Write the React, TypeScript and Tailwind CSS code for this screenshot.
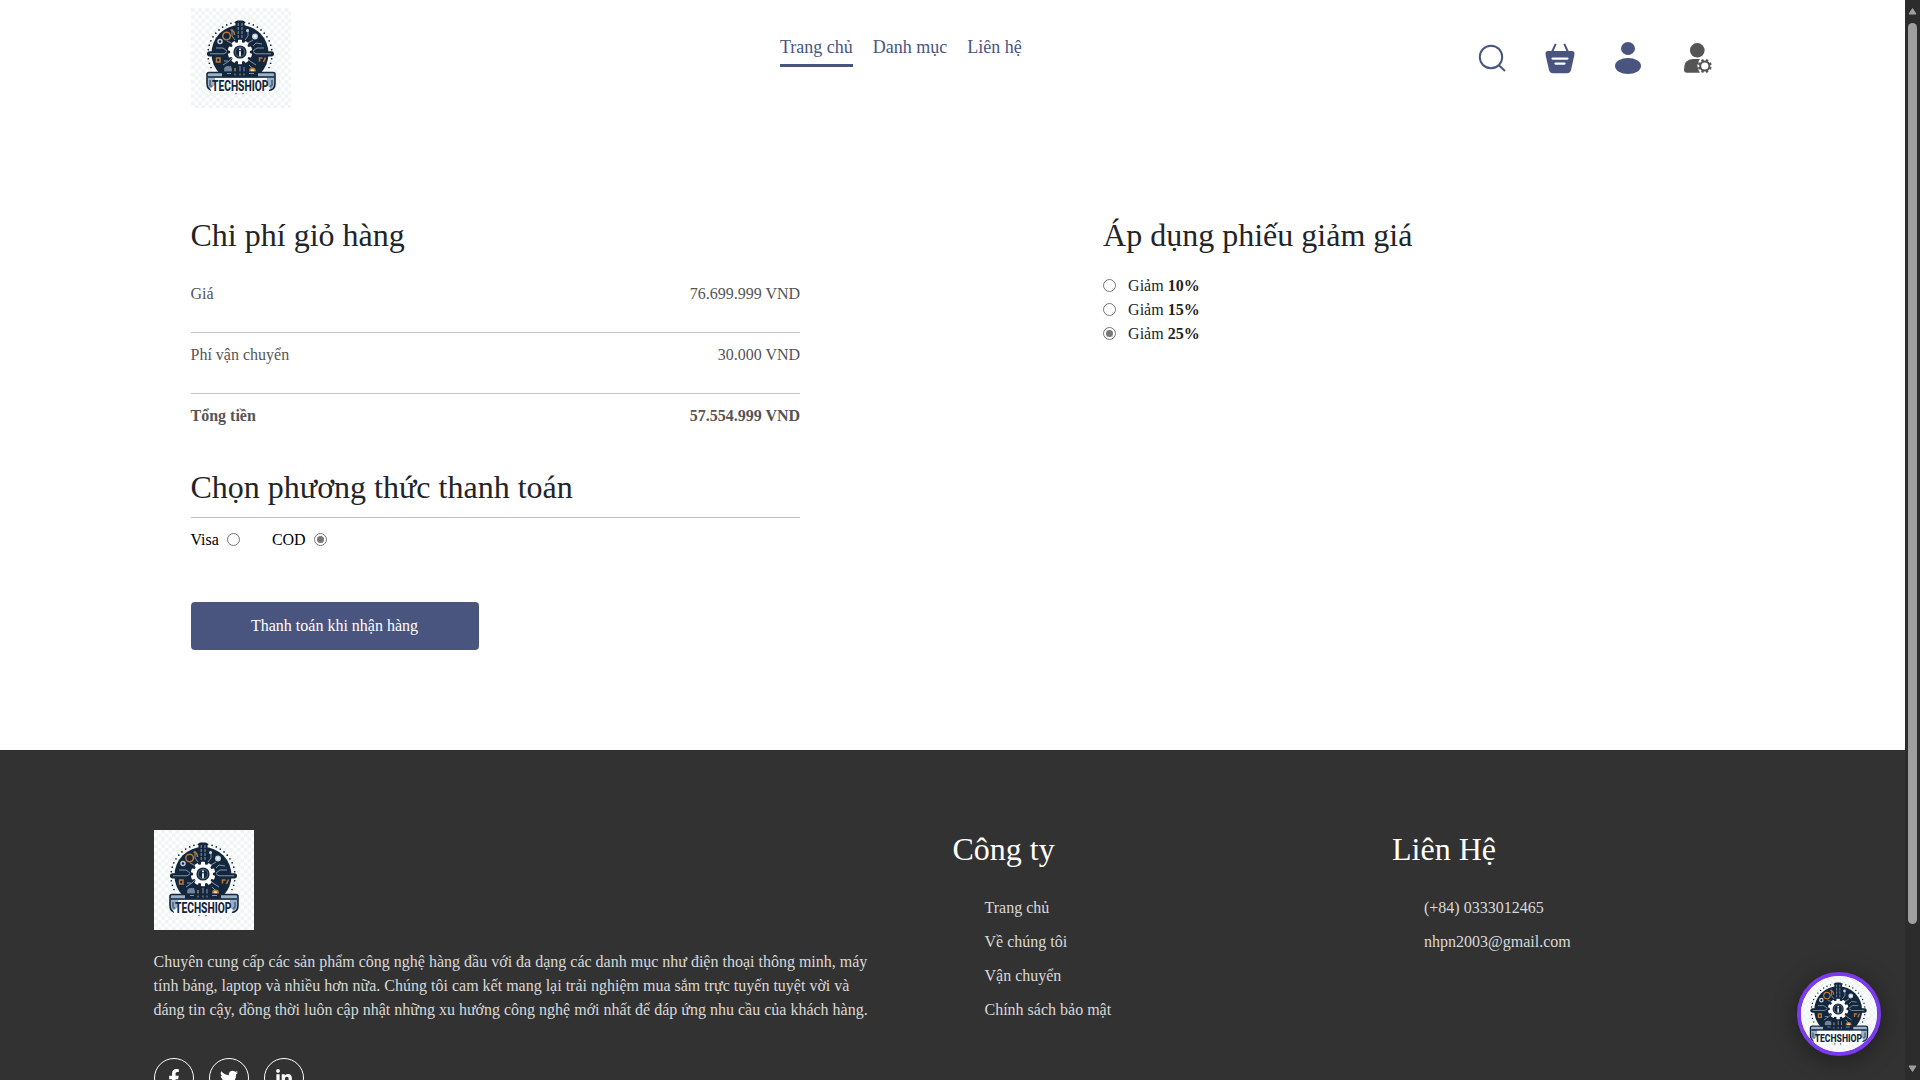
import React from 'react';
import { FaFacebookF, FaTwitter, FaLinkedinIn } from 'react-icons/fa';

const NAVY = '#14263c';

function Logo({ className }: { className?: string }) {
  const dots = Array.from({ length: 29 }, (_, i) => ((-205 + (i * 230) / 28) * Math.PI) / 180);
  const teeth = Array.from({ length: 10 }, (_, i) => i * 36);
  return (
    <svg viewBox="0 0 100 100" className={className}>
      <defs>
        <pattern id="checks" width="7.2" height="7.2" patternUnits="userSpaceOnUse">
          <rect width="7.2" height="7.2" fill="#fdfefe" />
          <rect width="3.6" height="3.6" fill="#f0f4f4" />
          <rect x="3.6" y="3.6" width="3.6" height="3.6" fill="#f0f4f4" />
        </pattern>
      </defs>
      <rect width="100" height="100" fill="url(#checks)" />
      {dots.map((a, i) => (
        <circle key={i} cx={49 + 32 * Math.cos(a)} cy={46 + 32 * Math.sin(a)} r="0.85" fill={NAVY} />
      ))}
      <circle cx="49" cy="45.5" r="28.5" fill={NAVY} />
      <rect x="44.500" y="12.500" width="9" height="12" rx="2" fill={NAVY} />
      <rect x="16" y="43.2" width="67" height="5.2" rx="2.6" fill={NAVY} />
      <g fill="none" stroke="#8da3b8" strokeWidth="0.9">
        <path d="M47.2 15v15M51 15v15" strokeDasharray="3 1" />
        <path d="M19 45.8h14l3-2M80 45.8H65l-3-2M25 40h7l4 3M73 40h-7l-4 3M71 36l-6-1-3 3" />
        <path d="M41 21v7l3 4M57 21v7l-3 4M36 33l4 2M62 32l-5 3M33 53h4M32 57l6-4 3-3M65 57l-6-4-3-3M49 58v10M53 59v9M40 58l-6 7M58 57l7 7" />
      </g>
      <g fill="none" stroke="#ba7a36" strokeWidth="1.5">
        <circle cx="35.600" cy="28" r="3.8" />
        <path d="M39.500 22q4 .5 4 5M25.500 50h3.500v4h-3.500zM68.500 53.500v-3.500h3M74.500 49.500l-2 4.500" />
        <circle cx="61.5" cy="63" r="2.7" fill="#f5d4a5" />
        <path d="M44 60v8" />
      </g>
      <g fill="none" stroke="#c5d0d9" strokeWidth="1.5">
        <circle cx="29" cy="33.5" r="2" />
        <circle cx="64" cy="28.5" r="2.2" fill="#eef3f6" />
        <circle cx="56.500" cy="22.500" r="0.8" />
      </g>
      <circle cx="37" cy="62" r="4" fill="#70859b" />
      <g fill="#fff">
        <circle cx="49" cy="44" r="10" />
        {teeth.map((t) => (
          <rect key={t} x="47" y="31.800" width="4" height="6" rx="0.8" transform={`rotate(${t} 49 44)`} />
        ))}
      </g>
      <circle cx="49" cy="44" r="6.6" fill={NAVY} />
      <circle cx="49" cy="44" r="4.8" fill="none" stroke="#6f8497" strokeWidth="0.7" />
      <path d="M49 40.5v1.7M49 43.2v5" stroke="#fff" strokeWidth="1.7" />
      <path
        d="M18 64.500H82q2 0 2 2v9q0 7-7 7H23q-7 0-7-7v-9q0-2 2-2z"
        fill="#9bb1ca"
        stroke={NAVY}
        strokeWidth="1.6"
      />
      <path d="M31 63.500H67V69H31z" fill={NAVY} />
      <path d="M36 65.500h4M44 65.500v2M49 65.500v2M53 65.500v2M58 65.500h5" stroke="#8da3b8" strokeWidth="0.9" />
      <path d="M17 69H83" fill="none" stroke={NAVY} strokeWidth="1.600" />
      <path d="M24 70H76V77l3 3-2 5H21l-2-5 5-3z" fill="#fbfcfd" />
      <path d="M19 72v5l2 2M81 72v5l-2 2" fill="none" stroke="#526b86" strokeWidth="1.800" />
      <text
        x="21"
        y="82.8"
        textLength="56.5"
        lengthAdjust="spacingAndGlyphs"
        fontFamily="Roboto, 'Liberation Sans', sans-serif"
        fontWeight="800"
        fontSize="14"
        fill={NAVY}
      >
        TECHSHIOP
      </text>
      <circle cx="45" cy="85.6" r="0.7" fill={NAVY} />
      <circle cx="52" cy="85.6" r="0.7" fill={NAVY} />
    </svg>
  );
}

function SearchIcon() {
  return (
    <svg width="28" height="28" viewBox="0 0 28 28" className="block" fill="none" stroke="#49557e" strokeWidth="2">
      <circle cx="13" cy="13" r="11.2" />
      <path d="M20.6 21L27 27" />
    </svg>
  );
}

function BasketIcon() {
  return (
    <svg width="30" height="31" viewBox="0 0 30 31" className="block">
      <path d="M3 8H27q3 0 2.4 4L26 27q-.9 3.300-4 3.300H8q-3.100 0-4-3.300L.6 12Q0 8 3 8z" fill="#49557e" />
      <path d="M7 9L10.700.8M23 9L19.300.8" stroke="#49557e" strokeWidth="2" />
      <path d="M7.500 15.600h15M10.500 20.600h9" stroke="#fff" strokeWidth="2.200" strokeLinecap="round" />
    </svg>
  );
}

function UserIcon() {
  return (
    <svg width="26" height="32" viewBox="0 0 26 32" className="block" fill="#49557e">
      <ellipse cx="13" cy="6.500" rx="7" ry="6.500" />
      <ellipse cx="13" cy="24" rx="13" ry="8" />
    </svg>
  );
}

function UserGearIcon() {
  return (
    <svg width="28" height="30" viewBox="0 0 28 30" className="block">
      <circle cx="13.300" cy="7.300" r="7.300" fill="#555" />
      <path d="M9 16H16q-2 2-1.500 4-2 2-.8 4 .3 3 2.300 5.700H3q-3 0-3-3Q0 16 9 16z" fill="#555" />
      <circle cx="20.800" cy="23" r="4.600" fill="none" stroke="#555" strokeWidth="2" />
      {[22.5, 67.5, 112.5, 157.5, 202.5, 247.5, 292.5, 337.5].map((t) => (
        <rect key={t} x="19.600" y="16" width="2.400" height="2.600" fill="#555" transform={`rotate(${t} 20.8 23)`} />
      ))}
    </svg>
  );
}

function Radio({ checked = false }: { checked?: boolean }) {
  return (
    <span className="mb-px flex size-[13px] shrink-0 items-center justify-center rounded-full border border-[#767676] bg-white">
      {checked && <span className="size-[7px] rounded-full bg-[#767676]" />}
    </span>
  );
}

const costs = [
  { label: 'Giá', value: '76.699.999 VND' },
  { label: 'Phí vận chuyển', value: '30.000 VND' },
];

const socials = [FaFacebookF, FaTwitter, FaLinkedinIn];

export default function App() {
  return (
    <div className="flex h-[1080px] w-[1920px] overflow-hidden bg-white font-['Liberation_Serif',serif] text-base text-[#212529]">
      <div className="relative flex w-[1905px] shrink-0 flex-col overflow-hidden">
        <header className="flex h-[116px] shrink-0 items-start pl-[191px] pr-[193px] pt-2">
          <Logo className="size-[100px]" />
          <nav className="ml-[489px] mt-[26px] flex gap-5 text-[18px] leading-[27px] text-[#49557e]">
            <a className="border-b-3 border-[#49557e] pb-[3px]">Trang chủ</a>
            <a>Danh mục</a>
            <a>Liên hệ</a>
          </nav>
          <div className="ml-auto mt-[34px] flex h-8 items-center gap-[40px]">
            <div className="-mr-px">
              <SearchIcon />
            </div>
            <BasketIcon />
            <UserIcon />
            <div className="ml-[3px]">
              <UserGearIcon />
            </div>
          </div>
        </header>

        <main className="flex h-[634px] shrink-0 pl-[190.5px] pt-[100px]">
          <section className="w-[609.600px]">
            <h2 className="text-[32px] leading-[38px]">Chi phí giỏ hàng</h2>
            <div className="mt-[28px] text-[#555]">
              {costs.map((c) => (
                <div key={c.label} className="mb-[10px] flex h-[51px] justify-between border-b border-[#c4c4c4] leading-6">
                  <span>{c.label}</span>
                  <span>{c.value}</span>
                </div>
              ))}
              <div className="flex justify-between font-bold leading-6">
                <span>Tổng tiền</span>
                <span>57.554.999 VND</span>
              </div>
            </div>
            <h2 className="mt-[40px] border-b border-[#c4c4c4] pb-[11px] text-[32px] leading-[38px]">
              Chọn phương thức thanh toán
            </h2>
            <div className="mt-[10px] flex items-center leading-6 text-black">
              <span className="mr-2">Visa</span>
              <Radio />
              <span className="ml-8 mr-2">COD</span>
              <Radio checked />
            </div>
            <button className="mt-[50px] h-12 w-[288px] rounded-[4px] bg-[#49557e] text-white">
              Thanh toán khi nhận hàng
            </button>
          </section>
          <section className="ml-[303px]">
            <h2 className="text-[32px] leading-[38px]">Áp dụng phiếu giảm giá</h2>
            <div className="mt-[20px]">
              {['10%', '15%', '25%'].map((p) => (
                <div key={p} className="flex h-6 items-center gap-3">
                  <Radio checked={p === '25%'} />
                  <span>
                    Giảm <b>{p}</b>
                  </span>
                </div>
              ))}
            </div>
          </section>
        </main>

        <footer className="grid h-[500px] shrink-0 grid-cols-[2fr_1fr_1fr] gap-20 bg-[#323232] px-[153.500px] pt-20 text-[#d9d9d9]">
          <div>
            <Logo className="size-[100px]" />
            <p className="mt-5 whitespace-nowrap leading-6">
              Chuyên cung cấp các sản phẩm công nghệ hàng đầu với đa dạng các danh mục như điện thoại thông minh, máy
              <br />
              tính bảng, laptop và nhiều hơn nữa. Chúng tôi cam kết mang lại trải nghiệm mua sắm trực tuyến tuyệt vời và
              <br />
              đáng tin cậy, đồng thời luôn cập nhật những xu hướng công nghệ mới nhất để đáp ứng nhu cầu của khách hàng.
            </p>
            <div className="mt-9 flex gap-[15px]">
              {socials.map((Icon, i) => (
                <span key={i} className="flex size-10 items-center justify-center rounded-full border border-white text-white">
                  <Icon size={18} />
                </span>
              ))}
            </div>
          </div>
          <div>
            <h2 className="text-[32px] leading-[38px] text-white">Công ty</h2>
            <ul className="mt-7 space-y-[10px] pl-8 leading-6">
              <li>Trang chủ</li>
              <li>Về chúng tôi</li>
              <li>Vận chuyển</li>
              <li>Chính sách bảo mật</li>
            </ul>
          </div>
          <div>
            <h2 className="text-[32px] leading-[38px] text-white">Liên Hệ</h2>
            <ul className="mt-7 space-y-[10px] pl-8 leading-6">
              <li>(+84) 0333012465</li>
              <li>nhpn2003@gmail.com</li>
            </ul>
          </div>
        </footer>

        <div className="absolute bottom-6 right-6 size-[84px] overflow-hidden rounded-full border-4 border-[#7c3aed] bg-white shadow-[0_4px_24px_rgba(0,0,0,0.4)]">
          <Logo className="-m-1 size-[84px] max-w-none" />
        </div>
      </div>

      <div className="flex w-[15px] shrink-0 flex-col items-center justify-between bg-[#2c2c2c] py-[7px]">
        <svg width="9" height="8" viewBox="0 0 9 8" className="block shrink-0">
          <path d="M4.500 1.500L8 7H1z" fill="#9f9f9f" stroke="#9f9f9f" strokeLinejoin="round" />
        </svg>
        <div className="mb-auto mt-2 h-[901px] w-[9px] rounded-full bg-[#9f9f9f]" />
        <svg width="9" height="8" viewBox="0 0 9 8" className="block shrink-0">
          <path d="M4.500 6.500L8 1H1z" fill="#9f9f9f" stroke="#9f9f9f" strokeLinejoin="round" />
        </svg>
      </div>
    </div>
  );
}
